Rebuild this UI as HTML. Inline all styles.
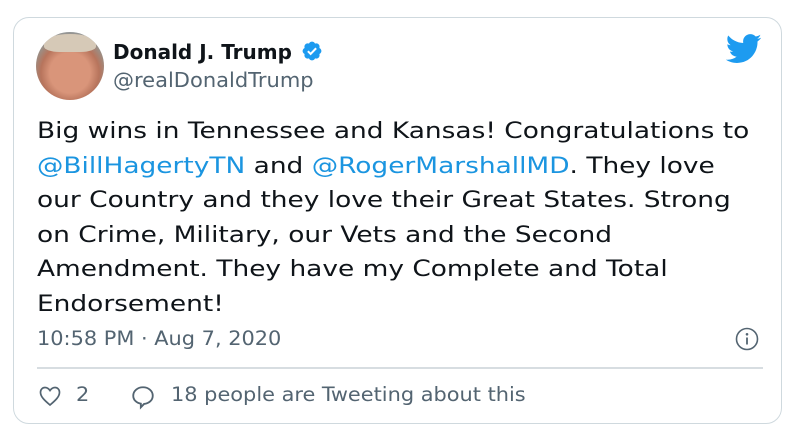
<!DOCTYPE html>
<html><head><meta charset="utf-8"><style>
html,body{margin:0;padding:0;background:#fff;width:800px;height:442px;overflow:hidden}
body{font-family:"DejaVu Sans","Liberation Sans",sans-serif;position:relative}
.card{position:absolute;left:13px;top:17px;width:769px;height:407px;border:1px solid #cfd9de;border-radius:16px;box-sizing:border-box}
.av{position:absolute;left:36px;top:32px;width:68px;height:68px;border-radius:50%;overflow:hidden;background:radial-gradient(circle at 50% 60%,#d9957a 0 38%,#b7745c 55%,#9a8f86 70%,#7fb5d8 100%)}
.av:before{content:"";position:absolute;left:8px;top:2px;width:52px;height:18px;border-radius:50% 50% 30% 30%;background:#d6c9b7}
.name{position:absolute;left:113px;top:40px;font-weight:bold;font-size:20px;color:#0f1419}
.handle{position:absolute;left:113px;top:68px;font-size:20px;color:#536471;transform:scaleX(1.05);transform-origin:0 0}
.text{position:absolute;left:37px;top:115px;white-space:nowrap;font-size:22px;line-height:34.6px;color:#0f1419;transform:scaleX(1.2);transform-origin:0 0}
.text a{color:#1b95e0;text-decoration:none}
.ts{position:absolute;left:37px;top:327px;font-family:"DejaVu Sans Condensed","DejaVu Sans",sans-serif;font-size:19.5px;color:#536471;transform:scaleX(1.19);transform-origin:0 0;white-space:nowrap}
.sep{position:absolute;left:37px;top:367px;width:726px;height:2px;background:#d7dde1}
.ft{position:absolute;left:37px;top:383px;font-family:"DejaVu Sans Condensed","DejaVu Sans",sans-serif;font-size:19.5px;color:#536471;transform:scaleX(1.19);transform-origin:0 0;white-space:nowrap}
</style></head><body>
<div class="card"></div>
<div class="av"></div>
<div class="name">Donald J. Trump <svg width="22" height="22" viewBox="0 0 24 24" style="vertical-align:-3px;margin-left:2px"><path fill="#1d9bf0" d="M22.25 12c0-1.43-.88-2.67-2.19-3.34.46-1.39.2-2.9-.81-3.910s-2.52-1.27-3.91-.81c-.66-1.31-1.91-2.19-3.34-2.19s-2.67.88-3.33 2.19c-1.4-.46-2.91-.2-3.920.81s-1.26 2.52-.8 3.91C2.63 9.33 1.75 10.57 1.75 12s.88 2.67 2.19 3.34c-.46 1.39-.2 2.9.81 3.91s2.52 1.26 3.91.81c.67 1.31 1.91 2.19 3.34 2.19s2.68-.88 3.34-2.19c1.39.45 2.9.2 3.91-.81s1.27-2.52.81-3.91c1.31-.67 2.19-1.91 2.19-3.34z"/><path d="M7.5 12.2l3 3 6-6.2" stroke="#fff" stroke-width="2.2" fill="none"/></svg></div>
<div class="handle">@realDonaldTrump</div>
<svg style="position:absolute;left:726px;top:34px" width="36" height="30" viewBox="0 0 24 20"><path fill="#1d9bf0" d="M23.6 2.4c-.9.4-1.8.6-2.8.8 1-.6 1.8-1.6 2.1-2.7-.9.6-2 1-3.1 1.2C18.9.7 17.6.1 16.2.1c-2.7 0-4.8 2.2-4.8 4.8 0 .4 0 .8.1 1.1C7.4 5.8 3.9 3.9 1.5 1 1.1 1.7.9 2.5.9 3.4c0 1.7.9 3.2 2.2 4-.8 0-1.5-.2-2.2-.6v.1c0 2.3 1.7 4.3 3.9 4.700-.4.1-.8.2-1.3.2-.3 0-.6 0-.9-.1.6 1.9 2.4 3.3 4.5 3.4-1.7 1.3-3.7 2.1-6 2.1-.4 0-.8 0-1.2-.1 2.1 1.4 4.7 2.2 7.4 2.2 8.9 0 13.7-7.4 13.7-13.7v-.6c1-.7 1.8-1.5 2.4-2.5z"/></svg>
<div class="text">Big wins in Tennessee and Kansas! Congratulations to<br><a>@BillHagertyTN</a> and <a>@RogerMarshallMD</a>. They love<br>our Country and they love their Great States. Strong<br>on Crime, Military, our Vets and the Second<br>Amendment. They have my Complete and Total<br>Endorsement!</div>
<div class="ts">10:58 PM · Aug 7, 2020</div>
<svg style="position:absolute;left:735px;top:327px" width="24" height="24" viewBox="0 0 24 24"><circle cx="12" cy="12" r="10.5" fill="none" stroke="#536471" stroke-width="1.6"/><circle cx="12" cy="7.3" r="1.3" fill="#536471"/><path d="M12 10.5v7" stroke="#536471" stroke-width="1.8"/></svg>
<div class="sep"></div>
<svg style="position:absolute;left:37px;top:384px" width="26" height="24" viewBox="0 0 24 24"><path d="M12 21C6 16 2.5 12.5 2.5 8.2 2.5 5.4 4.6 3.5 7 3.5c2 0 3.7 1.2 5 3 1.3-1.8 3-3 5-3 2.4 0 4.5 1.9 4.5 4.7 0 4.3-3.5 7.8-9.5 12.8z" fill="none" stroke="#536471" stroke-width="1.7"/></svg>
<div class="ft" style="left:76px">2</div>
<svg style="position:absolute;left:130px;top:384px" width="26" height="26" viewBox="0 0 24 24"><path d="M12 3c5 0 9 3.4 9 7.8 0 4.2-3.5 7.2-8 7.6L10 21.5v-3.3C5.8 17.5 3 14.5 3 10.8 3 6.4 7 3 12 3z" fill="none" stroke="#536471" stroke-width="1.7"/></svg>
<div class="ft" style="left:171px">18 people are Tweeting about this</div>
</body></html>
